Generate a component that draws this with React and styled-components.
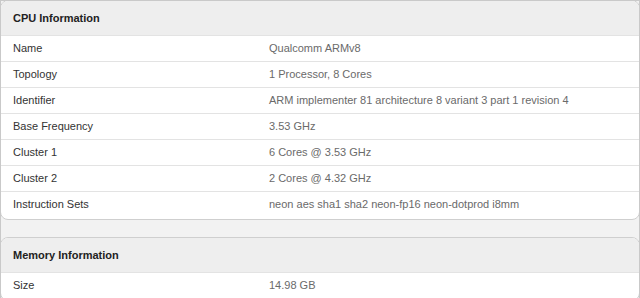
import React from "react";
import styled, { createGlobalStyle } from "styled-components";

const Global = createGlobalStyle`
  html, body { margin: 0; padding: 0; background: #f2f2f2; }
  body { font-family: "Liberation Sans", Arial, sans-serif; }
`;

const Frame = styled.div`
  box-sizing: border-box;
  width: 640px;
  height: 298px;
  overflow: hidden;
  border: 1px solid #c9c9c9;
  border-bottom: none;
  background: #f2f2f2;
  display: flex;
  flex-direction: column;
  gap: 18px;
`;

const Card = styled.section`
  box-sizing: border-box;
  margin: -1px -1px 0 -1px;
  padding-bottom: 2px;
  background: #ffffff;
  border: 1px solid #cfcfcf;
  border-radius: 8px;
  overflow: hidden;
  flex-shrink: 0;
`;

const Header = styled.div`
  height: 34px;
  display: flex;
  align-items: center;
  padding: 0 12px;
  background: #eeeeee;
  color: #222;
  font-size: 11px;
  font-weight: bold;
`;

const Row = styled.div`
  box-sizing: border-box;
  display: grid;
  grid-template-columns: 256px 1fr;
  align-items: center;
  height: 26px;
  padding: 0 12px 1px;
  font-size: 11px;
  border-top: 1px solid #e3e3e3;
`;

const Label = styled.div`
  color: #333;
`;

const Value = styled.div`
  color: #6a6a6a;
`;

const cpu = [
  ["Name", "Qualcomm ARMv8"],
  ["Topology", "1 Processor, 8 Cores"],
  ["Identifier", "ARM implementer 81 architecture 8 variant 3 part 1 revision 4"],
  ["Base Frequency", "3.53 GHz"],
  ["Cluster 1", "6 Cores @ 3.53 GHz"],
  ["Cluster 2", "2 Cores @ 4.32 GHz"],
  ["Instruction Sets", "neon aes sha1 sha2 neon-fp16 neon-dotprod i8mm"],
];

const mem = [["Size", "14.98 GB"]];

function InfoCard({ title, rows }) {
  return (
    <Card>
      <Header>{title}</Header>
      {rows.map(([k, v]) => (
        <Row key={k}>
          <Label>{k}</Label>
          <Value>{v}</Value>
        </Row>
      ))}
    </Card>
  );
}

export default function App() {
  return (
    <>
      <Global />
      <Frame>
        <InfoCard title="CPU Information" rows={cpu} />
        <InfoCard title="Memory Information" rows={mem} />
      </Frame>
    </>
  );
}
